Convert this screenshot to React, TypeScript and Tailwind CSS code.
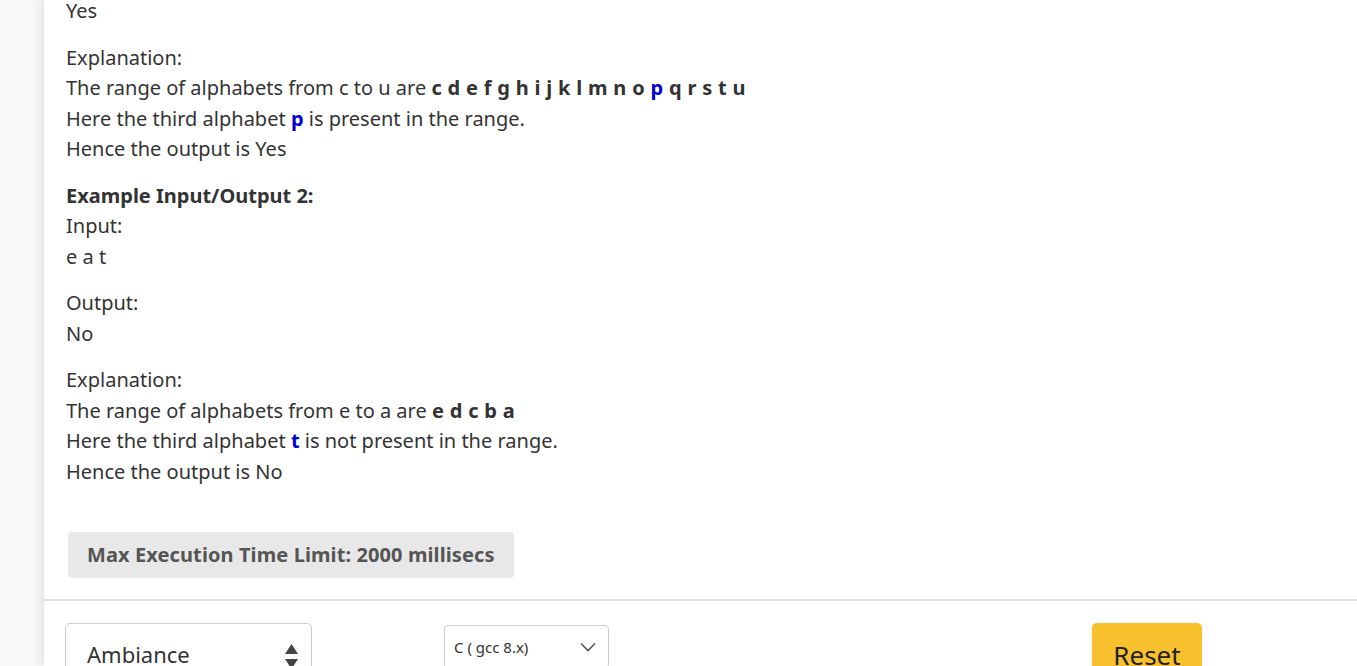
import React from 'react';

const font = { fontFamily: '"Noto Sans", "Open Sans", sans-serif' };

function Range({ letters, mark }: { letters: string[]; mark?: string }): React.ReactElement {
  return (
    <b className="font-bold tracking-[0.3px]">
      {letters.map((l, i) => (
        <span key={i} className={l === mark ? 'text-[#0000cc]' : ''}>
          {l}
          {i < letters.length - 1 ? ' ' : ''}
        </span>
      ))}
    </b>
  );
}

function Problem(): React.ReactElement {
  const cu = 'c d e f g h i j k l m n o p q r s t u'.split(' ');
  return (
    <div className="pl-[22px] pr-6 text-[20px] leading-[30.5px] text-[#333]">
      <p className="-mt-[4px]">Yes</p>

      <p className="mt-[16px]">
        Explanation:
        <br />
        The range of alphabets from c to u are <Range letters={cu} mark="p" />
        <br />
        Here the third alphabet <b className="text-[#0000cc]">p</b> is present in the range.
        <br />
        Hence the output is Yes
      </p>

      <p className="mt-[16px]">
        <b>Example Input/Output 2:</b>
        <br />
        Input:
        <br />e a t
      </p>

      <p className="mt-[16px]">
        Output:
        <br />
        No
      </p>

      <p className="mt-[16px]">
        Explanation:
        <br />
        The range of alphabets from e to a are <Range letters={['e', 'd', 'c', 'b', 'a']} />
        <br />
        Here the third alphabet <b className="text-[#0000cc]">t</b> is not present in the range.
        <br />
        Hence the output is No
      </p>

      <div className="mt-[45px] mb-[21px] ml-[2px] flex h-[46px] w-fit items-center rounded-[4px] bg-[#e8e8e8] px-[19px] text-[20px] font-bold tracking-[0.1px] text-[#555]">
        Max Execution Time Limit: 2000 millisecs
      </div>
    </div>
  );
}

function Toolbar(): React.ReactElement {
  return (
    <div className="flex items-start pt-[22px] pl-[21px]">
      <div className="flex h-[60px] w-[247px] shrink-0 items-center justify-between rounded-[5px] border border-[#ccc] pl-[21px] pr-[13px] pt-[2px] text-[22px] text-[#333]">
        <span>Ambiance</span>
        <svg width="13" height="26" viewBox="0 0 13 26" fill="#444" className="mt-[6px]">
          <path d="M6.5 0L13 10H0z" />
          <path d="M0 15h13L6.5 25z" />
        </svg>
      </div>
      <div className="ml-[132px] mt-[2px] flex h-[44px] w-[165px] shrink-0 items-center justify-between rounded-[4px] border border-[#ccc] pl-[9px] pr-[12px] text-[15px] text-[#333]">
        <span>C ( gcc 8.x)</span>
        <svg width="16" height="10" viewBox="0 0 16 10" fill="none" stroke="#555" strokeWidth="1.6">
          <path d="M1 1.5l7 7 7-7" />
        </svg>
      </div>
      <button className="ml-[483px] h-[56px] w-[110px] shrink-0 rounded-[5px] bg-[#f9c12e] pt-[8px] text-[26px] text-[#222] shadow-[0_1px_3px_rgba(0,0,0,0.15)]">
        Reset
      </button>
    </div>
  );
}

export default function App(): React.ReactElement {
  return (
    <div className="flex h-[666px] w-[1357px] overflow-hidden bg-[#f8f8f8]" style={font}>
      <div className="w-[44px] shrink-0" />
      <div className="flex flex-1 flex-col shadow-[-4px_0_8px_rgba(0,0,0,0.08)]">
        <div className="shrink-0 bg-white">
          <Problem />
        </div>
        <div className="h-[2px] shrink-0 bg-[#dedede]" />
        <div className="shrink-0 grow bg-white">
          <Toolbar />
        </div>
      </div>
    </div>
  );
}
